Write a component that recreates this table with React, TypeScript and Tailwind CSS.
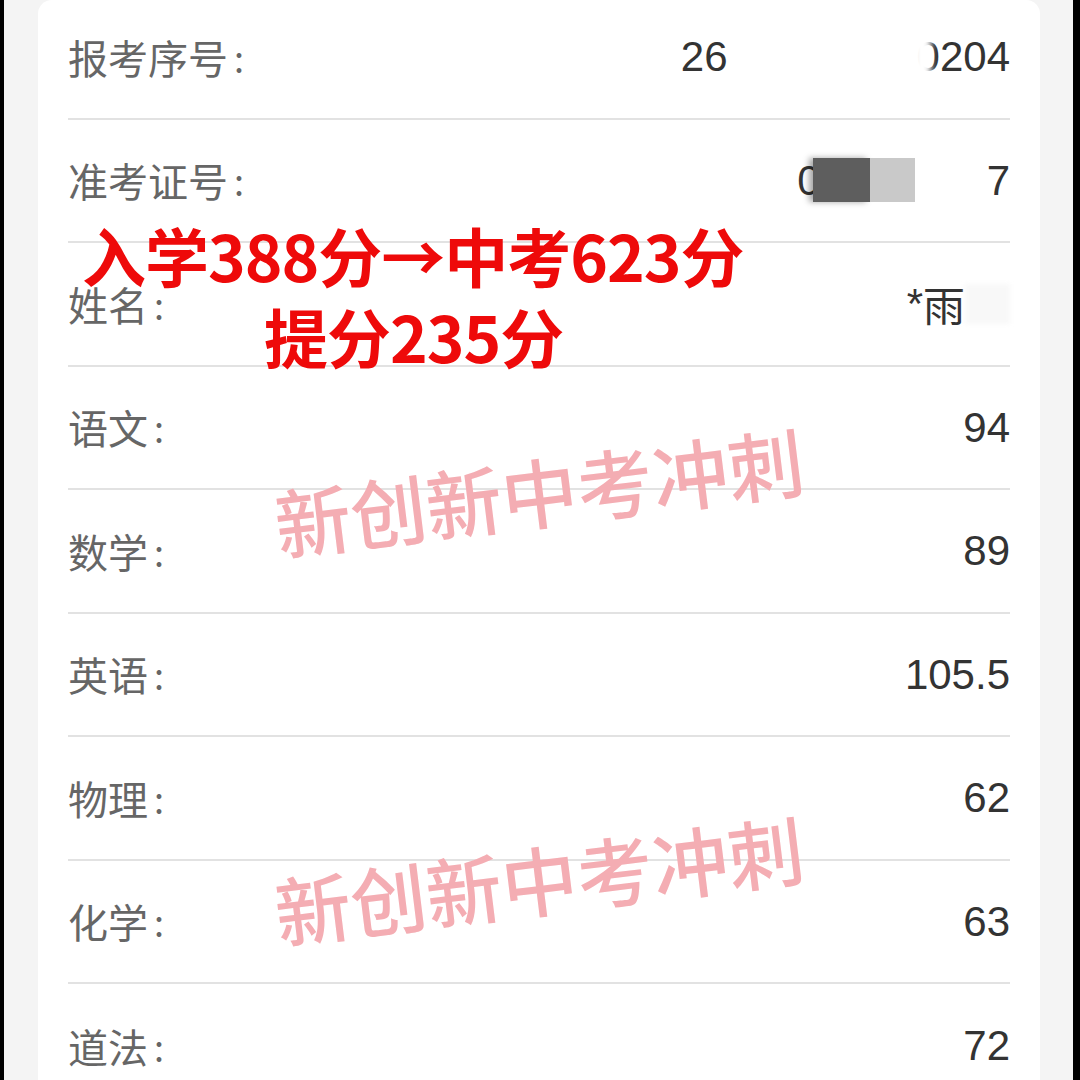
import * as React from "react"

const cjk = "font-['Noto_Sans_CJK_SC',sans-serif]"
const num = "font-['Liberation_Sans','Noto_Sans_CJK_SC',sans-serif]"

type Row = { label: string; value: React.ReactNode }

const rows: Row[] = [
  {
    label: "报考序号",
    value: (
      <div className="relative flex items-center">
        <span>26</span>
        <span className="w-[189px]" />
        <span>0204</span>
        <div className="absolute left-[232px] top-1/2 h-[50px] w-[18px] -translate-y-1/2 bg-white blur-[3px]" />
      </div>
    ),
  },
  {
    label: "准考证号",
    value: (
      <div className="flex items-center">
        <span>0</span>
        <div className="-ml-[8px] h-[44px] w-[57px] bg-[#5e5e5e] shadow-[-4px_0_6px_rgba(0,0,0,0.35)]" />
        <div className="h-[44px] w-[45px] bg-[#c9c9c9]" />
        <span className="w-[72px]" />
        <span>7</span>
      </div>
    ),
  },
  {
    label: "姓名",
    value: (
      <div className="flex items-center">
        <span>*</span>
        <span className={cjk}>雨</span>
        <div className="h-[40px] w-[45px] bg-[#f8f8f8] blur-[2px]" />
      </div>
    ),
  },
  { label: "语文", value: "94" },
  { label: "数学", value: "89" },
  { label: "英语", value: "105.5" },
  { label: "物理", value: "62" },
  { label: "化学", value: "63" },
  { label: "道法", value: "72" },
]

function Watermark({ top }: { top: number }) {
  return (
    <div
      className={`pointer-events-none absolute left-[235px] -rotate-[7deg] whitespace-nowrap text-[76px] leading-none font-medium text-[#f4adb3] ${cjk}`}
      style={{ top }}
    >
      新创新中考冲刺
    </div>
  )
}

export default function App() {
  return (
    <div className="flex h-[1080px] w-[1080px] overflow-hidden bg-[#f4f4f4]">
      <div className="w-[4px] shrink-0 bg-black" />
      <div className="w-[34px] shrink-0 bg-[#f4f4f4]" />
      <div className="relative flex-1 overflow-hidden rounded-t-[14px] bg-white px-[30px]">
        <div className="-mt-[4px] flex flex-col">
          {rows.map((r, i) => (
            <div
              key={r.label}
              className={`flex h-[123.5px] items-center justify-between ${i < rows.length - 1 ? "border-b-2 border-[#e2e2e2]" : ""}`}
            >
              <span className={`flex items-center text-[40px] text-[#666666] ${cjk}`}>
                {r.label}
                <span className="ml-[6px] text-[36px]">:</span>
              </span>
              <div className={`text-[42px] text-[#333333] ${num}`}>{r.value}</div>
            </div>
          ))}
        </div>

        <Watermark top={452} />
        <Watermark top={840} />

        <div className={`pointer-events-none absolute left-[44px] top-[214px] whitespace-nowrap text-[64px] leading-[80px] font-bold tracking-[-1px] text-[#ee0a0a] ${cjk}`}>
          入学388分→中考623分
        </div>
        <div className={`pointer-events-none absolute left-[226px] top-[295px] whitespace-nowrap text-[64px] leading-[80px] font-bold tracking-[-1px] text-[#ee0a0a] ${cjk}`}>
          提分235分
        </div>
      </div>
      <div className="w-[33px] shrink-0 bg-[#f4f4f4]" />
      <div className="w-[7px] shrink-0 bg-black" />
    </div>
  )
}
